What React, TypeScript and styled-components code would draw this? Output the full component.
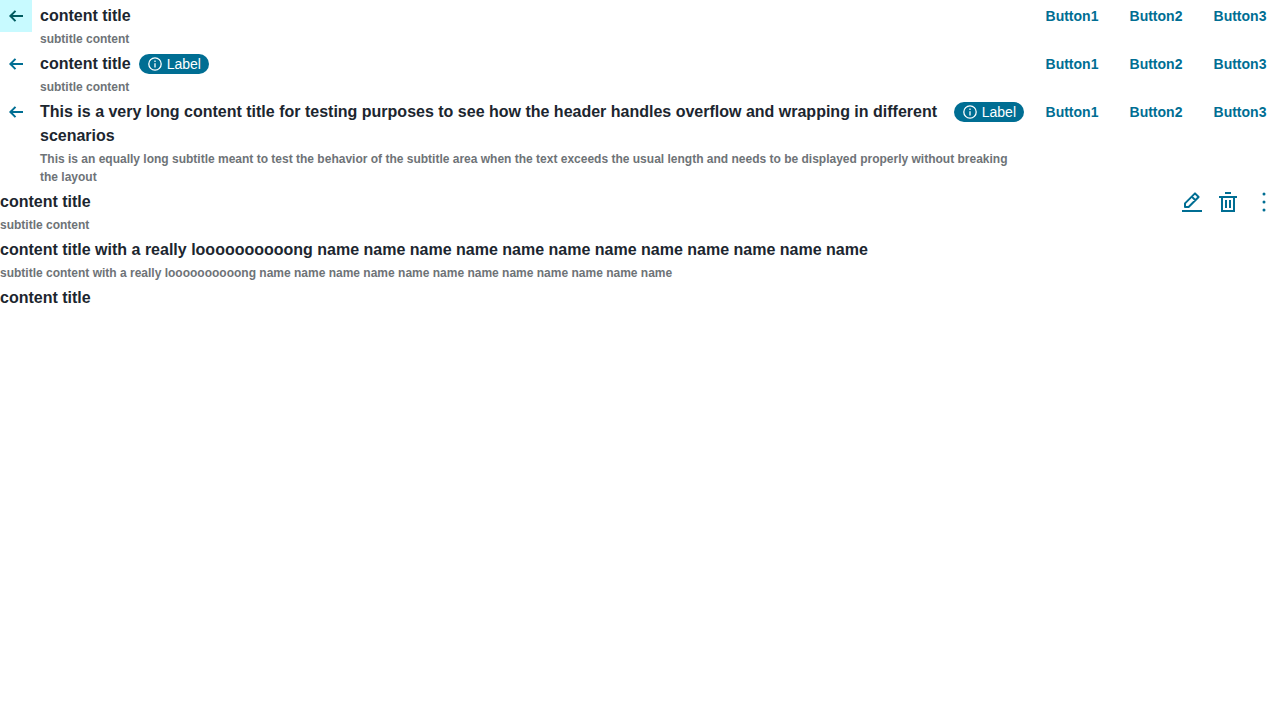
import React from "react";
import styled, { createGlobalStyle } from "styled-components";

const GlobalStyle = createGlobalStyle`
  *, *::before, *::after { box-sizing: border-box; }
  body {
    margin: 0;
    background: #ffffff;
    color: #1c262f;
    font-family: "Liberation Sans", Arial, sans-serif;
  }
`;

const Header = styled.header`
  display: flex;
  align-items: flex-start;
  gap: 8px;
`;

const Content = styled.div`
  flex: 1;
  min-width: 0;
  padding-top: 4px;
`;

const TitleRow = styled.div`
  display: flex;
  align-items: flex-start;
  gap: 8px;
`;

const Title = styled.h2`
  margin: 0;
  font-size: 16px;
  line-height: 24px;
  font-weight: 700;
`;

const Subtitle = styled.p`
  margin: 2px 0 0;
  color: #6e7377;
  font-size: 12px;
  line-height: 18px;
  font-weight: 700;
`;

const Badge = styled.span`
  display: inline-flex;
  flex: none;
  align-items: center;
  gap: 4px;
  height: 20px;
  margin-top: 2px;
  padding: 0 8px;
  border-radius: 10px;
  background: #006e93;
  color: #ffffff;
  font-size: 14px;
  line-height: 20px;
`;

const Actions = styled.div`
  display: flex;
  flex: none;
  gap: 4px;
`;

const BaseButton = styled.button`
  height: 32px;
  padding: 0;
  border: 0;
  background: transparent;
  color: #006e93;
  cursor: pointer;
`;

const TextButton = styled(BaseButton)`
  min-width: 80px;
  font-family: inherit;
  font-size: 14px;
  font-weight: 700;
  line-height: 20px;
`;

const IconButton = styled(BaseButton)<{ $active?: boolean }>`
  display: flex;
  flex: none;
  align-items: center;
  justify-content: center;
  width: 32px;
  ${({ $active }) => $active && "background: #c8faff; color: #005b60;"}
`;

const BackIcon = () => (
  <svg width="16" height="16" viewBox="0 0 16 16" fill="none" stroke="currentColor" strokeWidth="2" aria-hidden="true">
    <path d="M15 8H3M7.5 2.9L2.4 8l5.1 5.1" />
  </svg>
);

const InfoIcon = () => (
  <svg width="16" height="16" viewBox="0 0 16 16" fill="none" stroke="currentColor" strokeWidth="1.3" aria-hidden="true">
    <circle cx="8" cy="8" r="6.2" />
    <path d="M8 7.2v4.2M8 4.6v1.4" />
  </svg>
);

const EditIcon = () => (
  <svg width="24" height="24" viewBox="0 0 24 24" fill="none" stroke="currentColor" strokeWidth="2" aria-hidden="true">
    <path d="M2 21h20" />
    <path d="M5 17v-3.6L15 3.4l3.6 3.6L8.6 17zM11.8 6.6l3.6 3.6" strokeLinejoin="round" />
  </svg>
);

const DeleteIcon = () => (
  <svg width="24" height="24" viewBox="0 0 24 24" fill="none" stroke="currentColor" strokeWidth="2" aria-hidden="true">
    <path d="M9 3h6M3 7h18M6 7v14h12V7M10 10v8M14 10v8" />
  </svg>
);

const MoreIcon = () => (
  <svg width="24" height="24" viewBox="0 0 24 24" fill="currentColor" aria-hidden="true">
    <circle cx="12" cy="4" r="1.5" />
    <circle cx="12" cy="12" r="1.5" />
    <circle cx="12" cy="20" r="1.5" />
  </svg>
);

interface ContentHeaderProps {
  title: string;
  subtitle?: string;
  back?: boolean;
  backActive?: boolean;
  label?: string;
  actions?: React.ReactNode;
}

const ContentHeader = ({ title, subtitle, back, backActive, label, actions }: ContentHeaderProps) => (
  <Header>
    {back && (
      <IconButton type="button" aria-label="Back" $active={backActive}>
        <BackIcon />
      </IconButton>
    )}
    <Content>
      <TitleRow>
        <Title>{title}</Title>
        {label && (
          <Badge>
            <InfoIcon />
            {label}
          </Badge>
        )}
      </TitleRow>
      {subtitle && <Subtitle>{subtitle}</Subtitle>}
    </Content>
    {actions && <Actions>{actions}</Actions>}
  </Header>
);

const textActions = ["Button1", "Button2", "Button3"].map((name) => (
  <TextButton key={name} type="button">
    {name}
  </TextButton>
));

const iconActions = (
  <>
    <IconButton type="button" aria-label="Edit">
      <EditIcon />
    </IconButton>
    <IconButton type="button" aria-label="Delete">
      <DeleteIcon />
    </IconButton>
    <IconButton type="button" aria-label="More">
      <MoreIcon />
    </IconButton>
  </>
);

export default function App() {
  return (
    <>
      <GlobalStyle />
      <main>
        <ContentHeader back backActive title="content title" subtitle="subtitle content" actions={textActions} />
        <ContentHeader back title="content title" subtitle="subtitle content" label="Label" actions={textActions} />
        <ContentHeader
          back
          title="This is a very long content title for testing purposes to see how the header handles overflow and wrapping in different scenarios"
          subtitle="This is an equally long subtitle meant to test the behavior of the subtitle area when the text exceeds the usual length and needs to be displayed properly without breaking the layout"
          label="Label"
          actions={textActions}
        />
        <ContentHeader title="content title" subtitle="subtitle content" actions={iconActions} />
        <ContentHeader
          title="content title with a really loooooooooong name name name name name name name name name name name name"
          subtitle="subtitle content with a really loooooooooong name name name name name name name name name name name name"
        />
        <ContentHeader title="content title" />
      </main>
    </>
  );
}
